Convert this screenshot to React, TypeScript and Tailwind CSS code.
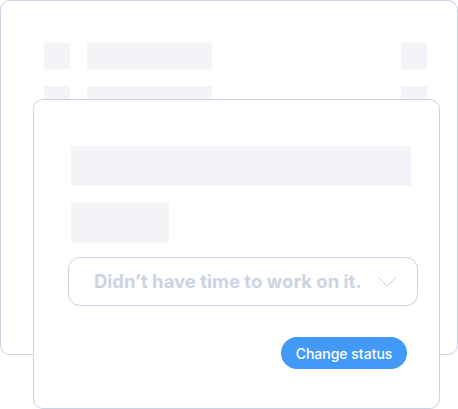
export default function App() {
  return (
    <div className="relative w-[458px] h-[409px] bg-white overflow-hidden" style={{ fontFamily: 'Inter, "Liberation Sans", sans-serif' }}>
      {/* back card */}
      <div className="w-[458px] h-[355px] rounded-[10px] border border-[#c9d3e3] bg-white pt-[42px] pl-[43px] pr-[30px] flex flex-col gap-[17px]">
        <div className="flex items-center">
          <div className="w-[26px] h-[26px] bg-[#f3f4f8]" />
          <div className="ml-[17px] w-[125px] h-[26px] bg-[#f3f4f8]" />
          <div className="ml-auto w-[26px] h-[26px] bg-[#f3f4f8]" />
        </div>
        <div className="flex items-center">
          <div className="w-[26px] h-[26px] bg-[#f3f4f8]" />
          <div className="ml-[17px] w-[125px] h-[26px] bg-[#f3f4f8]" />
          <div className="ml-auto w-[26px] h-[26px] bg-[#f3f4f8]" />
        </div>
      </div>

      {/* front card */}
      <div className="absolute left-[33px] top-[99px] w-[407px] h-[310px] rounded-[10px] border border-[#c9d3e3] bg-white pt-[46px] pl-[37px] flex flex-col">
        <div className="w-[340px] h-[40px] bg-[#f3f4f8]" />
        <div className="mt-[17px] w-[98px] h-[40px] bg-[#f3f4f8]" />
        <div className="mt-[14px] -ml-[3px] w-[350px] h-[49px] rounded-[12px] border border-[#c9d3e3] flex items-center pl-[25px] pr-[20px]">
          <span className="text-[18.5px] font-bold text-[#cbd4e3]">Didn’t have time to work on it.</span>
          <svg className="ml-auto" width="20" height="11" viewBox="0 0 20 11" fill="none">
            <path d="M1 1L10 10L19 1" stroke="#c3cee0" strokeWidth="1" />
          </svg>
        </div>
        <div className="mt-[31px] flex justify-end pr-[32px]">
          <button className="w-[126px] h-[32px] rounded-full bg-[#4299f7] text-white text-[14px] font-medium">
            Change status
          </button>
        </div>
      </div>
    </div>
  );
}
